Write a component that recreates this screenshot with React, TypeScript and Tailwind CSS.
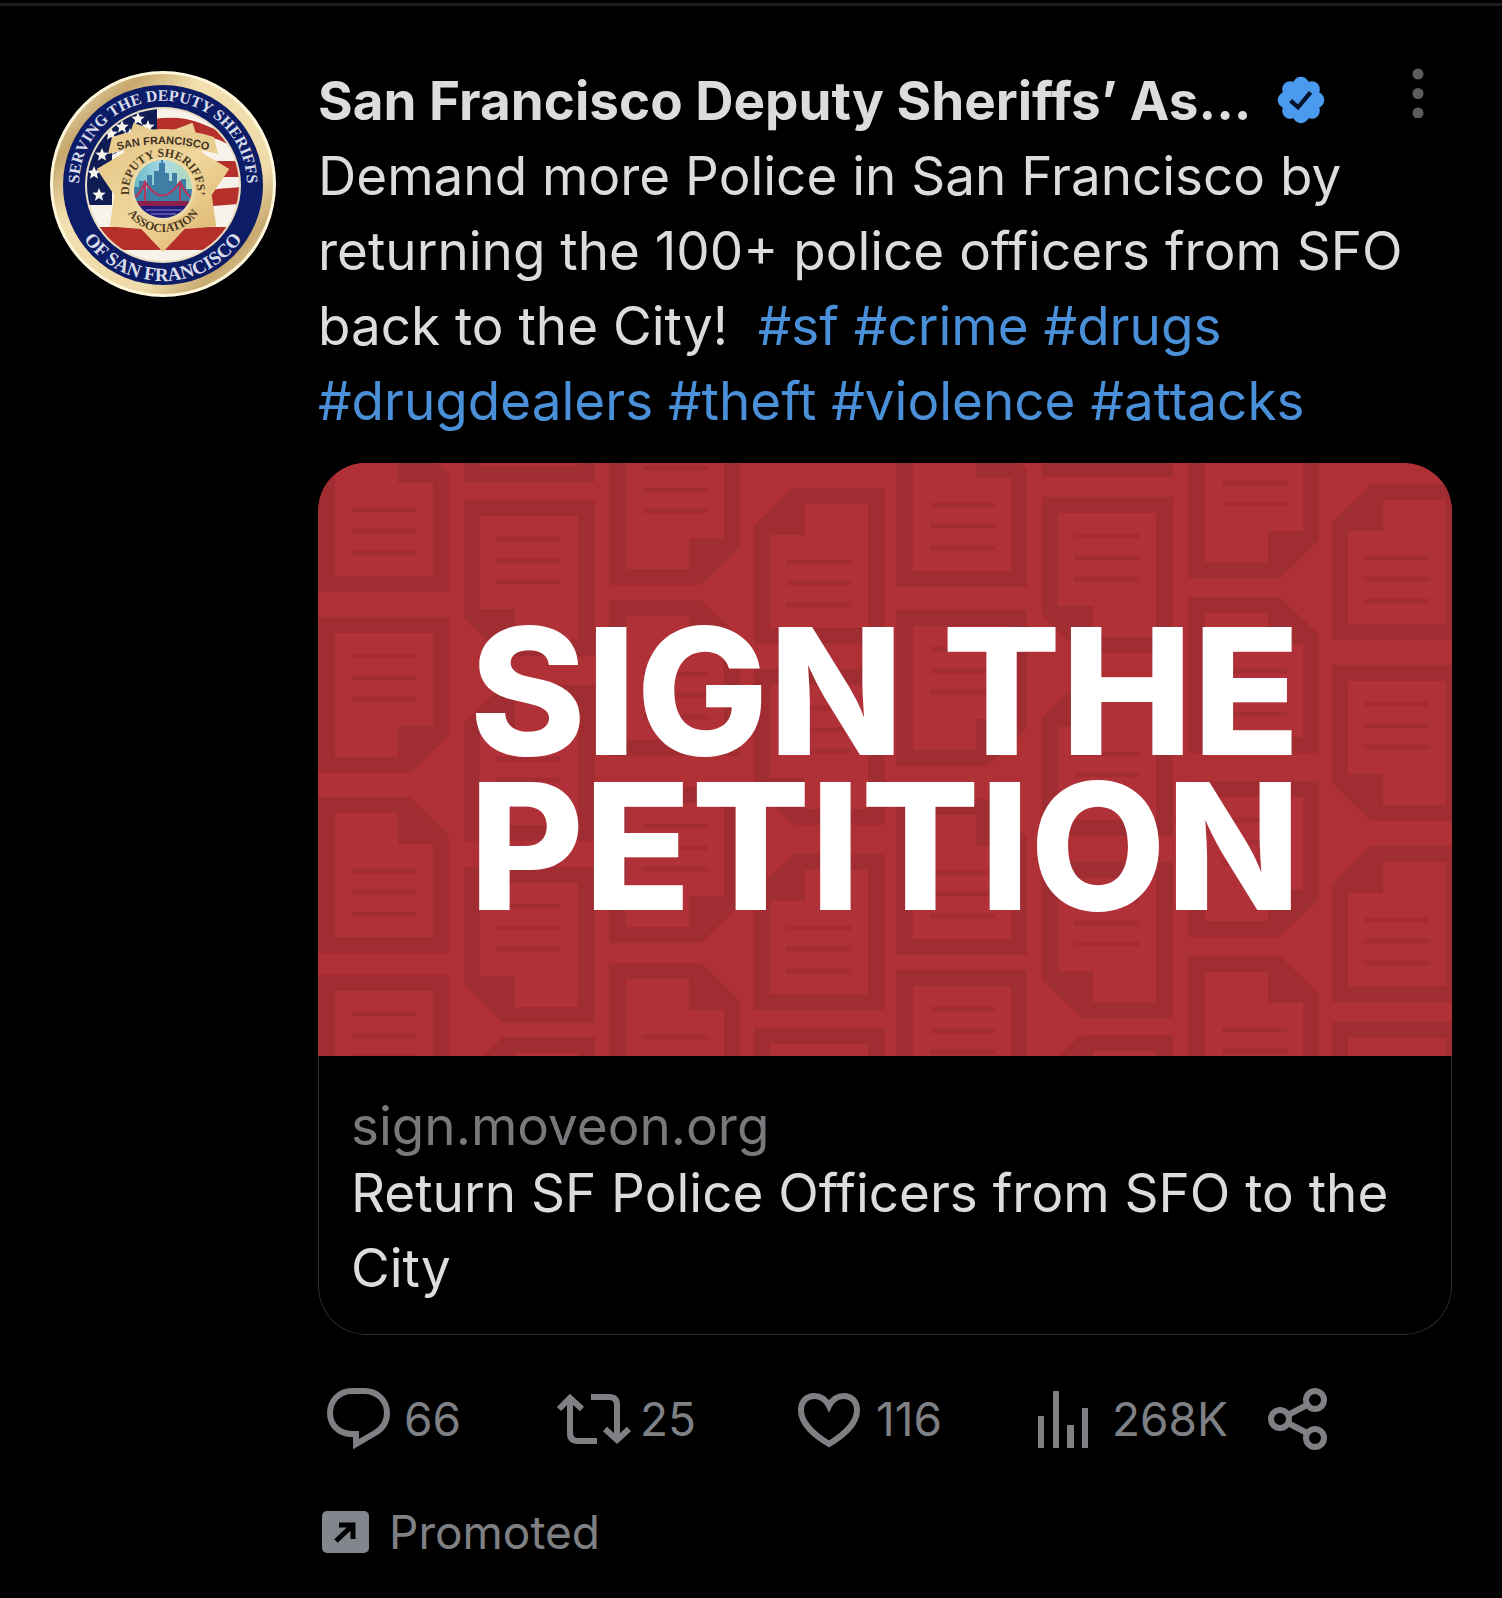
type Fold = 'tl' | 'tr' | 'bl' | 'br';

const hashtags = ['sf', 'crime', 'drugs', 'drugdealers', 'theft', 'violence', 'attacks'];

// [x, y, folded corner]
const sheets: [number, number, Fold][] = [
    [0, -27, 'tr'],
    [0, 154, 'br'],
    [0, 334, 'tr'],
    [0, 512, 'br'],
    [146, -137, 'tl'],
    [146, 37, 'bl'],
    [146, 222, 'tl'],
    [146, 404, 'bl'],
    [146, 574, 'tl'],
    [291, -34, 'br'],
    [291, 137, 'tr'],
    [291, 324, 'br'],
    [291, 500, 'tr'],
    [436, 25, 'tl'],
    [436, 206, 'bl'],
    [436, 391, 'tl'],
    [436, 565, 'bl'],
    [578, -32, 'tr'],
    [578, 147, 'br'],
    [578, 336, 'tr'],
    [578, 507, 'br'],
    [724, -142, 'tl'],
    [724, 34, 'bl'],
    [724, 217, 'tl'],
    [724, 399, 'bl'],
    [724, 572, 'tl'],
    [870, -41, 'br'],
    [870, 134, 'tr'],
    [870, 318, 'br'],
    [870, 493, 'tr'],
    [1014, 21, 'tl'],
    [1014, 202, 'bl'],
    [1014, 383, 'tl'],
    [1014, 559, 'bl'],
];

const flips: Record<Fold, string> = {
    tr: '',
    tl: 'translate(131 0) scale(-1 1)',
    br: 'translate(0 156) scale(1 -1)',
    bl: 'translate(131 156) scale(-1 -1)',
};

function Sheet({ x, y, fold }: { x: number; y: number; fold: Fold }) {
    return (
        <g transform={`translate(${x} ${y}) ${flips[fold]}`}>
            <path d="M0 0H92L131 38V156H0Z" fill="#a02d32" />
            <path d="M17 16H80V47H115V140H17Z" fill="#b03137" />
            <path d="M34 74H99M34 95H99M34 117H99" stroke="#a32d32" strokeWidth="5" />
        </g>
    );
}

function PetitionBanner() {
    return (
        <div className="relative aspect-[1134/593] w-full overflow-hidden bg-[#af3136]">
            <svg
                viewBox="0 0 1134 593"
                preserveAspectRatio="xMidYMid slice"
                className="absolute inset-0 h-full w-full"
                aria-hidden="true"
            >
                {sheets.map(([x, y, fold]) => (
                    <Sheet key={`${x}:${y}`} x={x} y={y} fold={fold} />
                ))}
            </svg>
            <div className="relative flex h-full items-center justify-center pt-4 text-center text-[176px] leading-[155px] font-extrabold text-white">
                <p>
                    SIGN THE
                    <br />
                    PETITION
                </p>
            </div>
        </div>
    );
}

function starPoints(cx: number, cy: number, outer: number, inner: number, tips: number, start: number) {
    return Array.from({ length: tips * 2 }, (_, i) => {
        const r = i % 2 === 0 ? outer : inner;
        const a = ((start + (i * 180) / tips) * Math.PI) / 180;
        return `${(cx + r * Math.cos(a)).toFixed(1)},${(cy + r * Math.sin(a)).toFixed(1)}`;
    }).join(' ');
}

const flagStars = [
    [49, 124],
    [44, 102],
    [52, 84],
    [66, 78],
    [61, 63],
    [72, 56],
    [80, 64],
    [88, 48],
    [98, 56],
];

function SheriffSeal() {
    return (
        <svg
            viewBox="0 0 226 226"
            className="h-full w-full"
            role="img"
            aria-label="San Francisco Deputy Sheriffs' Association seal"
        >
            <defs>
                <linearGradient id="rim" x1="0" y1="0" x2="1" y2="1">
                    <stop offset="0" stopColor="#fff6d8" />
                    <stop offset="0.2" stopColor="#c6a76c" />
                    <stop offset="0.35" stopColor="#f3dfae" />
                    <stop offset="0.7" stopColor="#efdaa9" />
                    <stop offset="0.82" stopColor="#c9aa70" />
                    <stop offset="1" stopColor="#f8e8c0" />
                </linearGradient>
                <linearGradient id="badge" x1="0" y1="0" x2="1" y2="1">
                    <stop offset="0" stopColor="#e3c183" />
                    <stop offset="0.5" stopColor="#f0d79c" />
                    <stop offset="1" stopColor="#dcb168" />
                </linearGradient>
                <linearGradient id="sky" x1="0" y1="0" x2="1" y2="0">
                    <stop offset="0" stopColor="#5fb4c4" />
                    <stop offset="0.5" stopColor="#a9dbe6" />
                    <stop offset="1" stopColor="#b5d8b0" />
                </linearGradient>
                <clipPath id="flag">
                    <circle cx="113" cy="114" r="76" />
                </clipPath>
                <clipPath id="city">
                    <circle cx="113" cy="118" r="29" />
                </clipPath>
                <path id="arc-top" d="M31 132A84 84 0 1 1 195 132" />
                <path id="arc-bottom" d="M17 114A96 96 0 0 0 209 114" />
                <path id="arc-name" d="M62 81Q113 65 164 81" />
                <path id="arc-deputy" d="M80 128A34 34 0 1 1 146 128" />
                <path id="arc-assoc" d="M70 118A43 43 0 0 0 156 118" />
            </defs>

            <circle cx="113" cy="113" r="113" fill="#fff7dc" />
            <circle cx="113" cy="113" r="110" fill="url(#rim)" />
            <circle cx="113" cy="114" r="100" fill="#0c1c66" />
            <circle cx="113" cy="114" r="78" fill="#e9dcc0" />

            <g clipPath="url(#flag)">
                <rect width="226" height="226" fill="#f7f2ea" />
                <path d="M104 48Q130 44 150 52T200 74V86Q170 66 150 64T104 62Z" fill="#b5302b" />
                <path d="M150 90H200V106H150ZM150 121Q175 116 200 116V132L150 136Z" fill="#b5302b" />
                <path d="M20 156H206V179H20Z" fill="#b5302b" />
                <path d="M20 30H107V62L62 84V134H20Z" fill="#101d55" />
                {flagStars.map(([x, y]) => (
                    <polygon key={`${x}:${y}`} points={starPoints(x, y, 7, 3, 5, -90)} fill="#f7f5ee" />
                ))}
            </g>

            <polygon points={starPoints(113, 113, 68, 50, 7, 90)} fill="url(#badge)" />
            <path d="M62 66Q113 50 164 66L168 83Q113 68 58 83Z" fill="#e9cc90" />

            <circle cx="113" cy="118" r="32" fill="#ecd9a8" />
            <g clipPath="url(#city)">
                <rect x="80" y="85" width="66" height="66" fill="url(#sky)" />
                <path
                    d="M84 134V116H89V110H94V118H97V104H102V114H104V100H109V92H111V86H113V92H115V102H119V110H122V102H127V114H131V108H136V118H142V134Z"
                    fill="#3f7fa6"
                />
                <path
                    d="M95 138V110M130 138V110M80 128Q88 128 95 111Q112 138 130 111Q138 128 146 128"
                    stroke="#b8355a"
                    strokeWidth="2"
                    fill="none"
                />
                <path d="M80 130H146V135H80Z" fill="#8c1f4c" />
                <path d="M80 135H146V150H80Z" fill="#241a78" />
                <path d="M96 139H132M101 143H126" stroke="#7a8fd6" strokeWidth="1" />
            </g>

            <g className="font-['Liberation_Serif',serif] font-bold" textAnchor="middle">
                <text fontSize="16" fill="#d9dcea">
                    <textPath href="#arc-top" startOffset="50%">
                        SERVING THE DEPUTY SHERIFFS
                    </textPath>
                </text>
                <text fontSize="19" fill="#d9dcea">
                    <textPath href="#arc-bottom" startOffset="50%">
                        OF SAN FRANCISCO
                    </textPath>
                </text>
                <text fontSize="12" fill="#4a3722">
                    <textPath href="#arc-deputy" startOffset="50%">
                        DEPUTY SHERIFFS’
                    </textPath>
                </text>
                <text fontSize="12" fill="#4a3722">
                    <textPath href="#arc-assoc" startOffset="50%">
                        ASSOCIATION
                    </textPath>
                </text>
            </g>
            <text
                fontSize="11"
                fill="#3d3226"
                textAnchor="middle"
                className="font-['Liberation_Sans',sans-serif] font-bold"
            >
                <textPath href="#arc-name" startOffset="50%">
                    SAN FRANCISCO
                </textPath>
            </text>
        </svg>
    );
}

function VerifiedBadge() {
    return (
        <svg viewBox="1 1 22 22" className="h-[50px] w-[50px] shrink-0" role="img" aria-label="Verified account">
            <path
                d="M22.25 12c0-1.43-.88-2.67-2.19-3.34.46-1.39.2-2.9-.81-3.91s-2.52-1.27-3.91-.81c-.66-1.31-1.91-2.19-3.34-2.19s-2.67.88-3.33 2.19c-1.4-.46-2.91-.2-3.92.81s-1.26 2.52-.8 3.91c-1.31.67-2.2 1.91-2.2 3.34s.89 2.67 2.2 3.34c-.46 1.39-.21 2.9.8 3.91s2.52 1.26 3.91.81c.67 1.31 1.91 2.19 3.34 2.19s2.68-.88 3.34-2.19c1.39.45 2.9.2 3.91-.81s1.27-2.52.81-3.91c1.31-.67 2.19-1.91 2.19-3.34z"
                fill="#4a9af0"
            />
            <path d="M7.4 12.3L10.7 15.2L16.2 8.6" stroke="#06142b" strokeWidth="1.9" fill="none" />
        </svg>
    );
}

function ReplyIcon() {
    return (
        <svg viewBox="0 0 78 76" className="h-[76px] w-[78px]" fill="none" stroke="currentColor" strokeWidth="6">
            <path d="M34 10H46C60 10 69 20 69 32C69 41 64 48 57 52L38 63V53H34C21 53 12 44 12 32C12 20 21 10 34 10Z" />
        </svg>
    );
}

function RepostIcon() {
    return (
        <svg viewBox="0 0 78 76" className="h-[76px] w-[78px]" fill="none" stroke="currentColor" strokeWidth="6">
            <path d="M5 28L16 17L28 28M16 18V52Q16 60 24 60H43" />
            <path d="M37 16H55Q63 16 63 24V58M51 48L63 59L75 48" />
        </svg>
    );
}

function LikeIcon() {
    return (
        <svg viewBox="0 0 78 76" className="h-[76px] w-[78px]" fill="none" stroke="currentColor" strokeWidth="6">
            <path d="M39 63C26 55 11 44 11 29C11 20 17 15 24 15C31 15 36 19 39 25C42 19 47 15 54 15C61 15 67 20 67 29C67 44 52 55 39 63Z" />
        </svg>
    );
}

function ViewsIcon() {
    return (
        <svg viewBox="0 0 78 76" className="h-[76px] w-[78px]" fill="currentColor">
            <path d="M12 35H18V67H12ZM27 10H33V67H27ZM41 44H48V67H41ZM56 27H62V67H56Z" />
        </svg>
    );
}

function ShareIcon() {
    return (
        <svg viewBox="0 0 78 76" className="h-[76px] w-[78px]" fill="none" stroke="currentColor" strokeWidth="6">
            <circle cx="18" cy="38" r="9" />
            <circle cx="53" cy="19" r="9" />
            <circle cx="53" cy="57" r="9" />
            <path d="M26 34L45 24M26 42L45 52" />
        </svg>
    );
}

const actions = [
    { label: 'Reply', count: '66', Icon: ReplyIcon },
    { label: 'Repost', count: '25', Icon: RepostIcon },
    { label: 'Like', count: '116', Icon: LikeIcon },
    { label: 'Views', count: '268K', Icon: ViewsIcon },
    { label: 'Share', count: '', Icon: ShareIcon },
];

export default function App() {
    return (
        <main className="min-h-screen bg-black pt-[3px] font-['Inter',sans-serif] text-[#dcdcdc]">
            <article className="flex gap-[42px] border-t-[3px] border-[#1f1f20] px-[50px] pt-[58px] pb-8">
                <a href="#profile" className="mt-[7px] block h-[226px] w-[226px] shrink-0">
                    <SheriffSeal />
                </a>

                <div className="min-w-0 flex-1">
                    <header className="flex h-[75px] items-center">
                        <h1 className="text-[53px] leading-[75px] font-bold whitespace-nowrap">
                            San Francisco Deputy Sheriffs’ As...
                        </h1>
                        <div className="mb-1 ml-6">
                            <VerifiedBadge />
                        </div>
                        <button type="button" aria-label="More" className="mt-1 mr-7 ml-auto self-start text-[#5c5c5e]">
                            <svg viewBox="0 0 12 50" className="h-[50px] w-3" fill="currentColor">
                                <circle cx="6" cy="6" r="5.5" />
                                <circle cx="6" cy="25.5" r="5.5" />
                                <circle cx="6" cy="45" r="5.5" />
                            </svg>
                        </button>
                    </header>

                    <p className="text-[53px] leading-[75px]">
                        Demand more Police in San Francisco by returning the 100+ police officers from SFO back to the
                        City!&nbsp;{' '}
                        {hashtags.map((tag) => (
                            <span key={tag}>
                                <a href={`#${tag}`} className="text-[#4a90d9]">
                                    #{tag}
                                </a>{' '}
                            </span>
                        ))}
                    </p>

                    <a href="#petition" className="mt-6 block overflow-hidden rounded-[48px]">
                        <PetitionBanner />
                        <div className="rounded-b-[48px] border border-t-0 border-[#2f3133] px-8 pt-10 pb-7 text-[53px]">
                            <p className="leading-[60px] text-[#77797c]">sign.moveon.org</p>
                            <p className="leading-[75px]">Return SF Police Officers from SFO to the City</p>
                        </div>
                    </a>

                    <div className="mt-[46px] grid grid-cols-[236px_236px_236px_236px_78px] text-[46px] text-[#7f8084]">
                        {actions.map(({ label, count, Icon }) => (
                            <button key={label} type="button" aria-label={label} className="flex items-center gap-2">
                                <Icon />
                                {count && <span>{count}</span>}
                            </button>
                        ))}
                    </div>

                    <div className="mt-12 flex items-center gap-5 pl-1 text-[46px] leading-[54px] text-[#7f8084]">
                        <svg viewBox="0 0 47 42" className="h-[42px] w-[47px]" aria-hidden="true">
                            <rect width="47" height="42" rx="5" fill="#80868b" />
                            <path d="M14 30L31 14M17 14H31V28" stroke="#000" strokeWidth="5" fill="none" />
                        </svg>
                        <span>Promoted</span>
                    </div>
                </div>
            </article>
        </main>
    );
}
